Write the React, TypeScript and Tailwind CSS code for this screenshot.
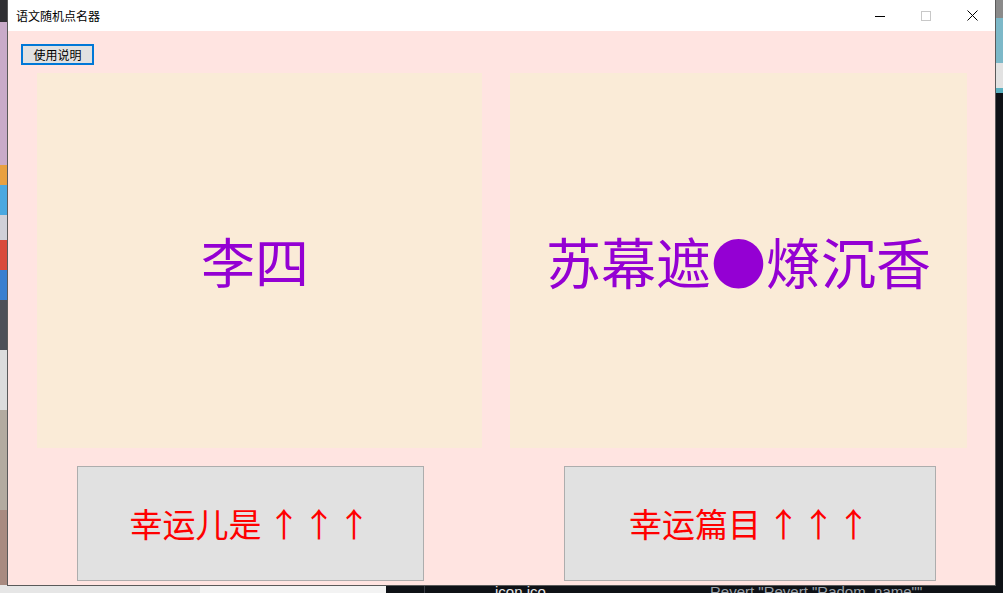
import React from "react";

const cjk = { fontFamily: '"Noto Sans CJK SC", "Noto Sans", sans-serif' };

function Arrows() {
  return (
    <span className="ml-[5px] flex">
      <span className="inline-block w-[35px] text-center">↑</span>
      <span className="inline-block w-[35px] text-center">↑</span>
      <span className="inline-block w-[35px] text-center">↑</span>
    </span>
  );
}

export default function App() {
  return (
    <div className="relative w-[1003px] h-[593px] overflow-hidden bg-[#111318]" style={cjk}>
      {/* desktop left strip */}
      <div className="absolute left-0 top-0 w-[8px] h-[593px] flex flex-col">
        <div className="h-[22px] bg-[#2f2f33]" />
        <div className="h-[143px] bg-[#c9abc9]" />
        <div className="h-[20px] bg-[#e8a040]" />
        <div className="h-[30px] bg-[#4aa8e0]" />
        <div className="h-[25px] bg-[#d0d0d8]" />
        <div className="h-[30px] bg-[#d94a3a]" />
        <div className="h-[30px] bg-[#3a7fd0]" />
        <div className="h-[50px] bg-[#4d4f57]" />
        <div className="h-[60px] bg-[#dcdcdc]" />
        <div className="h-[100px] bg-[#b3aba0]" />
        <div className="flex-1 bg-[#a88a80]" />
      </div>
      {/* desktop right strip */}
      <div className="absolute right-0 top-0 w-[7px] h-[593px] flex flex-col">
        <div className="h-[18px] bg-[#8a8a8a]" />
        <div className="h-[45px] bg-[#7cb8c8]" />
        <div className="h-[25px] bg-[#e2e2e2]" />
        <div className="h-[5px] bg-[#5ab0c0]" />
        <div className="flex-1 bg-[#0e1116]" />
      </div>
      {/* desktop bottom strip */}
      <div className="absolute left-0 top-[585px] w-[1003px] h-[8px] flex">
        <div className="w-[200px] bg-[#e6e6e6]" />
        <div className="w-[186px] bg-[#f3f3f3]" />
        <div className="relative flex-1 bg-[#0e1116] overflow-hidden">
          <div className="absolute left-[38px] top-0 w-px h-[8px] bg-[#3a3d44]" />
          <span className="absolute left-[109px] top-[-1px] text-[15px] leading-none text-[#e6e6e6]" style={{ fontFamily: '"Liberation Sans", sans-serif' }}>icon.ico</span>
          <span className="absolute left-[324px] top-[-1px] text-[15px] leading-none text-[#9aa0a8]" style={{ fontFamily: '"Liberation Sans", sans-serif' }}>Revert "Revert "Radom_name""</span>
        </div>
      </div>

      {/* window */}
      <div className="absolute left-[7px] top-0 w-[989px] h-[586px] border border-[#5a5a5a] border-t-0 flex flex-col bg-[#ffe4e1]">
        {/* title bar */}
        <div className="h-[31px] bg-white flex items-center">
          <span className="ml-[8px] text-[12px] text-black leading-none">语文随机点名器</span>
          <div className="ml-auto flex h-full">
            <div className="w-[46px] h-full flex items-center justify-center">
              <svg width="10" height="10" viewBox="0 0 10 10"><path d="M0 5.5h10" stroke="#000" strokeWidth="1" /></svg>
            </div>
            <div className="w-[46px] h-full flex items-center justify-center">
              <svg width="10" height="10" viewBox="0 0 10 10"><rect x="0.5" y="0.5" width="9" height="9" fill="none" stroke="#c8c8c8" strokeWidth="1" /></svg>
            </div>
            <div className="w-[46px] h-full flex items-center justify-center">
              <svg width="11" height="11" viewBox="0 0 11 11"><path d="M0.5 0.5L10.5 10.5M10.5 0.5L0.5 10.5" stroke="#000" strokeWidth="1" /></svg>
            </div>
          </div>
        </div>
        {/* content */}
        <div className="flex-1 flex flex-col">
          <div className="ml-[13px] mt-[13px] w-[73px] h-[21px] border-2 border-[#0078d7] bg-[#e1e1e1] flex items-center justify-center text-[12px] text-black leading-none">
            使用说明
          </div>
          <div className="mt-[8px] ml-[29px] flex gap-[28px]">
            <div className="w-[445px] h-[375px] pr-[9px] bg-[#faebd7] flex items-center justify-center text-[54px] leading-none text-[#9400d3]">
              李四
            </div>
            <div className="w-[457px] h-[375px] bg-[#faebd7] flex items-center justify-center text-[55px] leading-none text-[#9400d3] whitespace-nowrap">
              苏幕遮●燎沉香
            </div>
          </div>
          <div className="mt-[18px] ml-[69px] flex">
            <div className="w-[347px] h-[115px] border border-[#adadad] bg-[#e1e1e1] flex items-center justify-center text-[33px] leading-none text-[#ff0000]">
              <span>幸运儿是</span>
              <Arrows />
            </div>
            <div className="ml-[140px] w-[372px] h-[115px] border border-[#adadad] bg-[#e1e1e1] flex items-center justify-center text-[33px] leading-none text-[#ff0000]">
              <span>幸运篇目</span>
              <Arrows />
            </div>
          </div>
        </div>
      </div>
    </div>
  );
}
